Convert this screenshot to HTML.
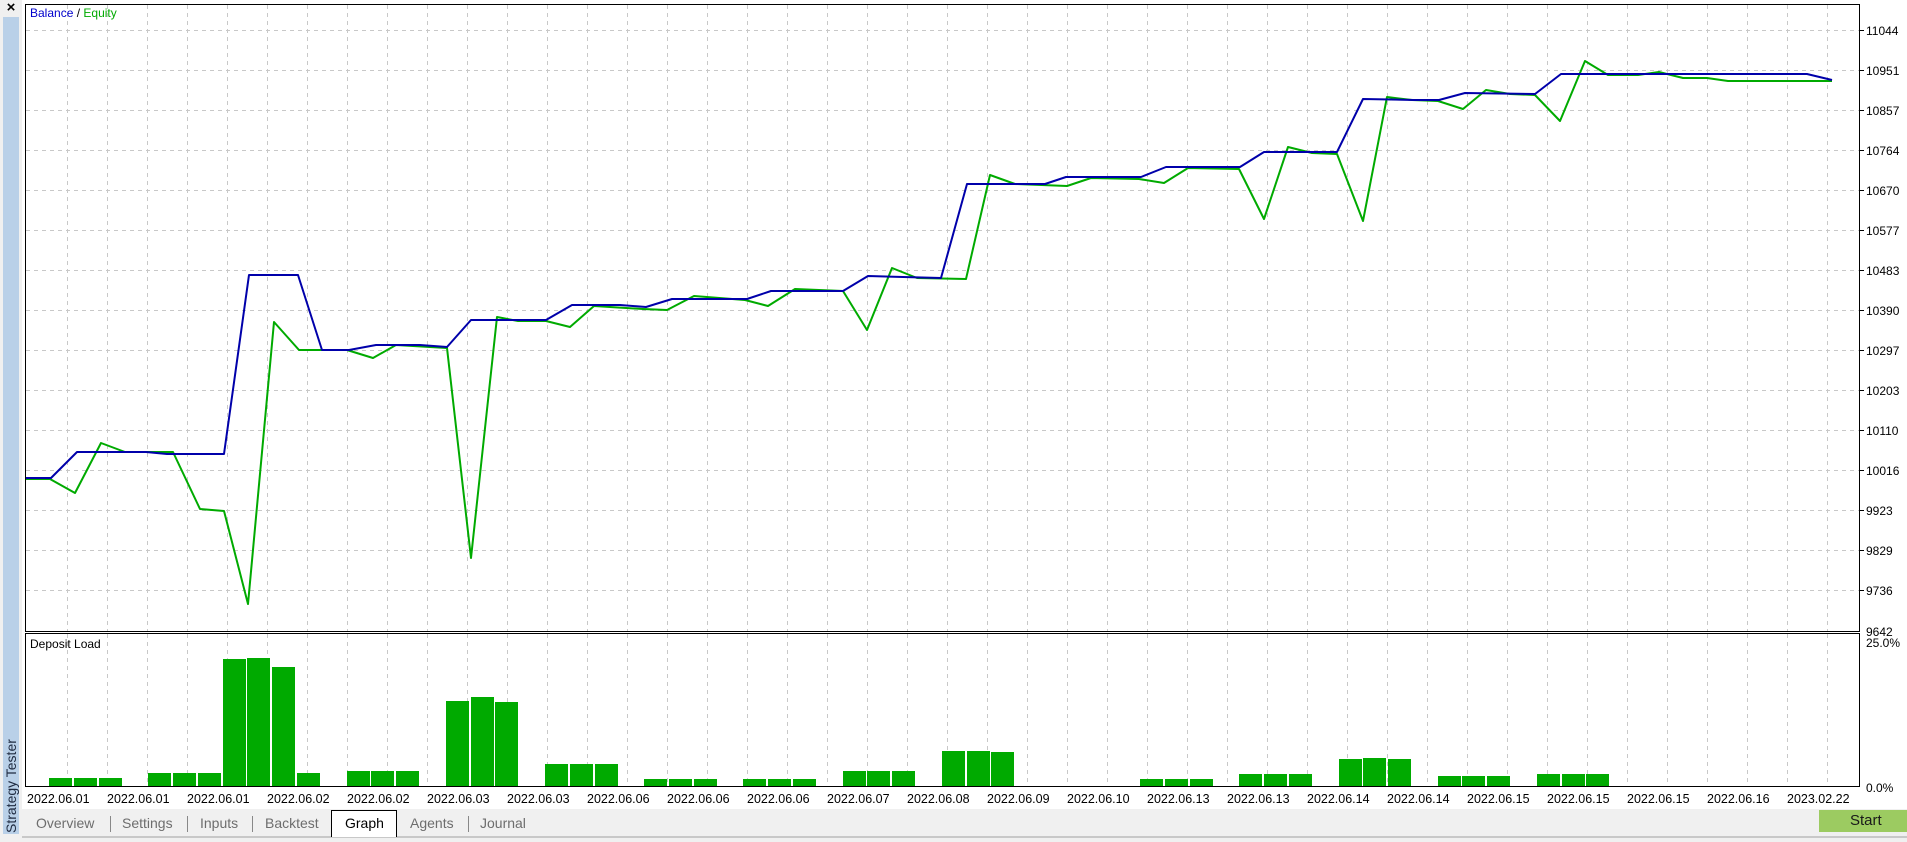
<!DOCTYPE html>
<html><head><meta charset="utf-8"><style>
html,body{margin:0;padding:0}
body{width:1907px;height:842px;position:relative;overflow:hidden;background:#fff;font-family:"Liberation Sans",sans-serif}
.t{position:absolute;font-size:12px;color:#000;white-space:nowrap}
</style></head><body>
<div style="position:absolute;left:0;top:0;width:22px;height:842px;background:#f0f0f0"></div>
<div style="position:absolute;left:3px;top:17px;width:16px;height:817px;background:#b9d0e8"></div>
<div style="position:absolute;left:3px;top:0;width:16px;height:16px;font-size:15px;line-height:16px;text-align:center;font-weight:bold">×</div>
<div style="position:absolute;left:11px;top:833px;transform:rotate(-90deg);transform-origin:0 0;font-size:14px;color:#1e2a40;white-space:nowrap;line-height:16px;margin-left:-8px">Strategy Tester</div>
<div style="position:absolute;left:22px;top:809px;width:1885px;height:33px;background:#f0f0f0"></div>
<div style="position:absolute;left:22px;top:836px;width:1885px;height:2px;background:#c8c8c8"></div>
<div style="position:absolute;left:331px;top:810px;width:64px;height:26px;background:#fff;border:1px solid #000;border-bottom:none"></div>
<div class="t" style="left:36px;top:815px;font-size:14px;color:#6d6d6d">Overview</div>
<div style="position:absolute;left:110px;top:816px;width:1px;height:16px;background:#888"></div>
<div class="t" style="left:122px;top:815px;font-size:14px;color:#6d6d6d">Settings</div>
<div style="position:absolute;left:187px;top:816px;width:1px;height:16px;background:#888"></div>
<div class="t" style="left:200px;top:815px;font-size:14px;color:#6d6d6d">Inputs</div>
<div style="position:absolute;left:252px;top:816px;width:1px;height:16px;background:#888"></div>
<div class="t" style="left:265px;top:815px;font-size:14px;color:#6d6d6d">Backtest</div>
<div class="t" style="left:345px;top:815px;font-size:14px;color:#000">Graph</div>
<div class="t" style="left:410px;top:815px;font-size:14px;color:#6d6d6d">Agents</div>
<div style="position:absolute;left:468px;top:816px;width:1px;height:16px;background:#888"></div>
<div class="t" style="left:480px;top:815px;font-size:14px;color:#6d6d6d">Journal</div>
<div style="position:absolute;left:1819px;top:810px;width:88px;height:22px;background:#9ccb61"></div>
<div class="t" style="left:1850px;top:812px;font-size:15px;color:#1a1a1a">Start</div>

<svg style="position:absolute;left:0;top:0" width="1907" height="842">
<g stroke="#c8c8c8" stroke-width="1" stroke-dasharray="4,4" fill="none">
<path d="M26 30.5H1859M26 70.5H1859M26 110.5H1859M26 150.5H1859M26 190.5H1859M26 230.5H1859M26 270.5H1859M26 310.5H1859M26 350.5H1859M26 390.5H1859M26 430.5H1859M26 470.5H1859M26 510.5H1859M26 550.5H1859M26 590.5H1859"/>
<path d="M67.5 5V631M107.5 5V631M147.5 5V631M187.5 5V631M227.5 5V631M267.5 5V631M307.5 5V631M347.5 5V631M387.5 5V631M427.5 5V631M467.5 5V631M507.5 5V631M547.5 5V631M587.5 5V631M627.5 5V631M667.5 5V631M707.5 5V631M747.5 5V631M787.5 5V631M827.5 5V631M867.5 5V631M907.5 5V631M947.5 5V631M987.5 5V631M1027.5 5V631M1067.5 5V631M1107.5 5V631M1147.5 5V631M1187.5 5V631M1227.5 5V631M1267.5 5V631M1307.5 5V631M1347.5 5V631M1387.5 5V631M1427.5 5V631M1467.5 5V631M1507.5 5V631M1547.5 5V631M1587.5 5V631M1627.5 5V631M1667.5 5V631M1707.5 5V631M1747.5 5V631M1787.5 5V631M1827.5 5V631"/>
<path d="M67.5 634V786M107.5 634V786M147.5 634V786M187.5 634V786M227.5 634V786M267.5 634V786M307.5 634V786M347.5 634V786M387.5 634V786M427.5 634V786M467.5 634V786M507.5 634V786M547.5 634V786M587.5 634V786M627.5 634V786M667.5 634V786M707.5 634V786M747.5 634V786M787.5 634V786M827.5 634V786M867.5 634V786M907.5 634V786M947.5 634V786M987.5 634V786M1027.5 634V786M1067.5 634V786M1107.5 634V786M1147.5 634V786M1187.5 634V786M1227.5 634V786M1267.5 634V786M1307.5 634V786M1347.5 634V786M1387.5 634V786M1427.5 634V786M1467.5 634V786M1507.5 634V786M1547.5 634V786M1587.5 634V786M1627.5 634V786M1667.5 634V786M1707.5 634V786M1747.5 634V786M1787.5 634V786M1827.5 634V786"/>
</g>
<g stroke="#000" stroke-width="1" fill="none">
<rect x="25.5" y="4.5" width="1834" height="627"/>
<rect x="25.5" y="633.5" width="1834" height="153"/>
<path d="M1860 30.5h4M1860 70.5h4M1860 110.5h4M1860 150.5h4M1860 190.5h4M1860 230.5h4M1860 270.5h4M1860 310.5h4M1860 350.5h4M1860 390.5h4M1860 430.5h4M1860 470.5h4M1860 510.5h4M1860 550.5h4M1860 590.5h4"/>
</g>
<polyline fill="none" stroke="#00aa00" stroke-width="2" stroke-linejoin="round" points="26,479 50,479 75,493 101,443 125,452 173,452 200,509 224,511 248,604 274,322 299,350 347,350 373,358 396,345 447,348 471,558 497,317 518,321 546,321 570,327 594,306 643,309 667,310 694,296 745,300 768,306 795,289 843,291 867,330 892,268 917,278 966,279 990,175 1015,184 1067,186 1091,178 1139,179 1164,183 1188,168 1239,169 1264,219 1288,147 1312,153 1337,154 1363,221 1387,97 1412,100 1438,101 1463,109 1486,90 1510,94 1535,95 1560,121 1585,61 1608,75 1638,75 1659,72 1683,78 1707,78 1728,81 1832,81"/>
<polyline fill="none" stroke="#0000aa" stroke-width="2" stroke-linejoin="round" points="26,478 51,478 77,452 146,452 167,454 224,454 249,275 298,275 322,350 349,350 376,345 420,345 447,347 471,320 546,320 572,305 620,305 646,307 672,299 747,299 771,291 843,291 868,276 941,278 967,184 1045,184 1066,177 1141,177 1166,167 1240,167 1264,152 1337,152 1363,99 1414,100 1439,100 1465,93 1535,94 1561,74 1807,74 1832,80"/>
<g fill="#00aa00">
<rect x="49" y="778" width="23" height="8"/><rect x="74" y="778" width="23" height="8"/><rect x="99" y="778" width="23" height="8"/>
<rect x="148" y="773" width="23" height="13"/><rect x="173" y="773" width="23" height="13"/><rect x="198" y="773" width="23" height="13"/>
<rect x="223" y="659" width="23" height="127"/><rect x="247" y="658" width="23" height="128"/><rect x="272" y="667" width="23" height="119"/>
<rect x="297" y="773" width="23" height="13"/>
<rect x="347" y="771" width="23" height="15"/><rect x="371" y="771" width="23" height="15"/><rect x="396" y="771" width="23" height="15"/>
<rect x="446" y="701" width="23" height="85"/><rect x="471" y="697" width="23" height="89"/><rect x="495" y="702" width="23" height="84"/>
<rect x="545" y="764" width="23" height="22"/><rect x="570" y="764" width="23" height="22"/><rect x="595" y="764" width="23" height="22"/>
<rect x="644" y="779" width="23" height="7"/><rect x="669" y="779" width="23" height="7"/><rect x="694" y="779" width="23" height="7"/>
<rect x="743" y="779" width="23" height="7"/><rect x="768" y="779" width="23" height="7"/><rect x="793" y="779" width="23" height="7"/>
<rect x="843" y="771" width="23" height="15"/><rect x="867" y="771" width="23" height="15"/><rect x="892" y="771" width="23" height="15"/>
<rect x="942" y="751" width="23" height="35"/><rect x="967" y="751" width="23" height="35"/><rect x="991" y="752" width="23" height="34"/>
<rect x="1140" y="779" width="23" height="7"/><rect x="1165" y="779" width="23" height="7"/><rect x="1190" y="779" width="23" height="7"/>
<rect x="1239" y="774" width="23" height="12"/><rect x="1264" y="774" width="23" height="12"/><rect x="1289" y="774" width="23" height="12"/>
<rect x="1339" y="759" width="23" height="27"/><rect x="1363" y="758" width="23" height="28"/><rect x="1388" y="759" width="23" height="27"/>
<rect x="1438" y="776" width="23" height="10"/><rect x="1462" y="776" width="23" height="10"/><rect x="1487" y="776" width="23" height="10"/>
<rect x="1537" y="774" width="23" height="12"/><rect x="1562" y="774" width="23" height="12"/><rect x="1586" y="774" width="23" height="12"/>
</g>
<g font-family="Liberation Sans, sans-serif" font-size="12" fill="#000">
<text x="1866" y="35">11044</text><text x="1866" y="75">10951</text><text x="1866" y="115">10857</text><text x="1866" y="155">10764</text><text x="1866" y="195">10670</text><text x="1866" y="235">10577</text><text x="1866" y="275">10483</text><text x="1866" y="315">10390</text><text x="1866" y="355">10297</text><text x="1866" y="395">10203</text><text x="1866" y="435">10110</text><text x="1866" y="475">10016</text><text x="1866" y="515">9923</text><text x="1866" y="555">9829</text><text x="1866" y="595">9736</text><text x="1866" y="636">9642</text>
<text x="1866" y="647">25.0%</text><text x="1866" y="792">0.0%</text>
<text x="30" y="17"><tspan fill="#0000cc">Balance</tspan> / <tspan fill="#00aa00">Equity</tspan></text>
<text x="30" y="648">Deposit Load</text>
<g font-size="12.5">
<text x="27" y="803">2022.06.01</text><text x="107" y="803">2022.06.01</text><text x="187" y="803">2022.06.01</text><text x="267" y="803">2022.06.02</text><text x="347" y="803">2022.06.02</text><text x="427" y="803">2022.06.03</text><text x="507" y="803">2022.06.03</text><text x="587" y="803">2022.06.06</text><text x="667" y="803">2022.06.06</text><text x="747" y="803">2022.06.06</text><text x="827" y="803">2022.06.07</text><text x="907" y="803">2022.06.08</text><text x="987" y="803">2022.06.09</text><text x="1067" y="803">2022.06.10</text><text x="1147" y="803">2022.06.13</text><text x="1227" y="803">2022.06.13</text><text x="1307" y="803">2022.06.14</text><text x="1387" y="803">2022.06.14</text><text x="1467" y="803">2022.06.15</text><text x="1547" y="803">2022.06.15</text><text x="1627" y="803">2022.06.15</text><text x="1707" y="803">2022.06.16</text><text x="1787" y="803">2023.02.22</text>
</g>
</g>
</svg>
</body></html>
